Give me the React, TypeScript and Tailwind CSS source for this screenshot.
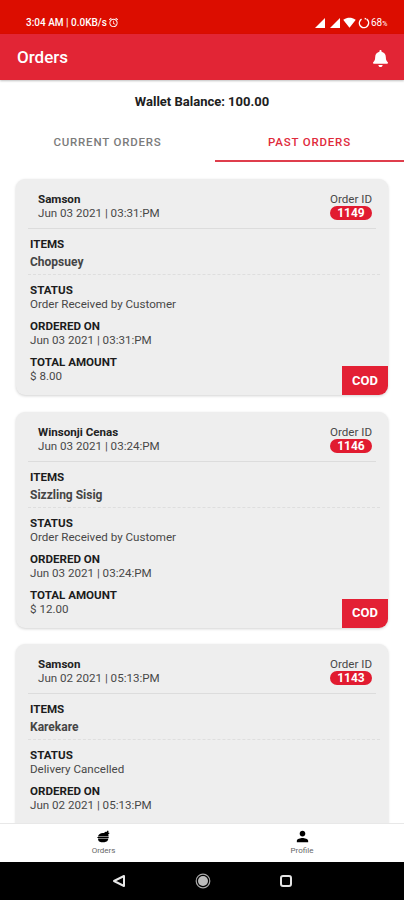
import { FaBell } from 'react-icons/fa';
import { MdPerson, MdSignalCellular4Bar, MdSignalWifi4Bar, MdAlarm } from 'react-icons/md';

const orders = [
  { id: '1149', name: 'Samson', date: 'Jun 03 2021 | 03:31:PM', item: 'Chopsuey', status: 'Order Received by Customer', total: '8.00' },
  { id: '1146', name: 'Winsonji Cenas', date: 'Jun 03 2021 | 03:24:PM', item: 'Sizzling Sisig', status: 'Order Received by Customer', total: '12.00' },
  { id: '1143', name: 'Samson', date: 'Jun 02 2021 | 05:13:PM', item: 'Karekare', status: 'Delivery Cancelled', total: '10.00' },
];

function StatusBar() {
  return (
    <div className="h-[34px] shrink-0 bg-[#dc0d00] text-white flex items-center justify-between pl-[26px] pr-[15px] pt-[11px]">
      <div className="flex items-center text-[10px] font-medium">
        <span className="w-[82px] whitespace-nowrap">3:04 AM | 0.0KB/s</span>
        <MdAlarm size={11} />
      </div>
      <div className="flex items-center">
        <MdSignalCellular4Bar size={12} />
        <MdSignalCellular4Bar size={12} className="ml-[3px]" />
        <MdSignalWifi4Bar size={13} className="ml-[2px]" />
        <svg width="12" height="12" viewBox="0 0 12 12" className="ml-[2px]" fill="none" stroke="white">
          <circle cx="6" cy="6" r="4.6" strokeWidth="1.5" strokeDasharray="23 3 1.5 1.4" transform="rotate(-55 6 6)" />
        </svg>
        <span className="ml-[1px] text-[10px] w-[18px] whitespace-nowrap">
          68<span className="text-[7px]">%</span>
        </span>
      </div>
    </div>
  );
}

function OrderCard({ order }: { order: (typeof orders)[number] }) {
  return (
    <div className="relative h-[216px] shrink-0 rounded-[9px] bg-[#eeeeee] shadow-[0_1px_3px_rgba(0,0,0,0.18)] overflow-hidden text-[11.6px] leading-[14px] text-[#484848]">
      <div className="mx-[12px] h-[50px] pt-[13px] pl-[10px] pr-[4px] flex justify-between border-b border-[#dcdcdc]">
        <div>
          <p className="font-bold text-[#222]">{order.name}</p>
          <p>{order.date}</p>
        </div>
        <div className="w-[42px] text-center">
          <p className="whitespace-nowrap">Order ID</p>
          <p className="h-[14px] rounded-full bg-[#e11b30] text-white font-bold text-xs leading-[14px]">{order.id}</p>
        </div>
      </div>
      <div className="ml-[12px] mr-[8px] pl-[2px] h-[46px] pt-[8px] border-b border-dashed border-[#dedede]">
        <p className="font-bold text-[#1c1c1c]">ITEMS</p>
        <p className="mt-[4px] text-xs leading-[14px] font-bold text-[#454545]">{order.item}</p>
      </div>
      <div className="pl-[14px] pt-[8px]">
        <p className="font-bold text-[#1c1c1c]">STATUS</p>
        <p>{order.status}</p>
        <p className="mt-[8px] font-bold text-[#1c1c1c]">ORDERED ON</p>
        <p>{order.date}</p>
        <p className="mt-[8px] font-bold text-[#1c1c1c]">TOTAL AMOUNT</p>
        <p>$ {order.total}</p>
      </div>
      <div className="absolute right-0 bottom-0 w-[46px] h-[29px] bg-[#e32034] text-white font-bold text-[13px] flex items-center justify-center">
        COD
      </div>
    </div>
  );
}

export default function App() {
  return (
    <div className="w-full h-[900px] flex flex-col overflow-hidden bg-white font-['Roboto',sans-serif]">
      <StatusBar />
      <header className="h-[46px] shrink-0 bg-[#e22535] text-white flex items-center justify-between pl-[17px] pr-[15px] pt-[2px] shadow-[0_1px_2px_rgba(0,0,0,0.25)]">
        <h1 className="text-[17px] font-medium">Orders</h1>
        <FaBell size={17} />
      </header>

      <p className="h-[43px] shrink-0 text-center text-[13px] leading-[43px] font-bold text-[#202020]">
        Wallet Balance: 100.00
      </p>
      <div className="h-[39px] shrink-0 flex text-[11.5px] font-medium tracking-[0.8px] leading-[39px] text-center">
        <div className="w-[215px] text-[#7b7b7b]">CURRENT ORDERS</div>
        <div className="flex-1 text-[#e02a3b] border-b-2 border-[#df3e4c]">PAST ORDERS</div>
      </div>

      <main className="flex-1 min-h-0 overflow-hidden px-4 pt-[17px] flex flex-col gap-[16.5px]">
        {orders.map((order) => (
          <OrderCard key={order.id} order={order} />
        ))}
      </main>

      <nav className="relative h-[39px] shrink-0 bg-white border-t border-[#e8e8e8] flex text-[8px] leading-[9px] text-[#666]">
        <div className="w-[207px] flex flex-col items-center pt-[6px]">
          <svg width="13" height="13" viewBox="0 0 13 13" fill="black">
            <path d="M1 6.2C1.6 3.8 4 2.5 7 3L8.4 1.7 9.4 2 10.6.4 11.6 1 11.2 2.5 12.7 2.9 11.2 4.6 11.7 6.5H1z" />
            <path d="M.4 7.1h11.3v1H.4zM1 8.6h10.4c-.3 2.3-1.7 3.6-4 3.6H4.2C2.2 12.2 1 10.8 1 8.6z" />
          </svg>
          <span className="mt-[3px]">Orders</span>
        </div>
        <div className="w-[190px] flex flex-col items-center pt-[4px]">
          <MdPerson size={17} className="text-black" />
          <span className="mt-[1px]">Profile</span>
        </div>
      </nav>

      <div className="h-[38px] shrink-0 bg-black flex items-center pl-[112px] gap-[68px]">
        <svg width="15" height="16" viewBox="0 0 15 16" fill="none" stroke="#e8e8e8" strokeWidth="2" strokeLinejoin="round">
          <path d="M2 8 12 3v10z" />
        </svg>
        <svg width="16" height="16" viewBox="0 0 16 16" fill="none">
          <circle cx="8" cy="8" r="5" fill="#bcbcbc" />
          <circle cx="8" cy="8" r="6.8" stroke="#a8a8a8" strokeWidth="1.2" />
        </svg>
        <svg width="14" height="14" viewBox="0 0 14 14" fill="none" stroke="#e4e4e4" strokeWidth="2">
          <rect x="2" y="2" width="10" height="10" rx="2" />
        </svg>
      </div>
    </div>
  );
}
